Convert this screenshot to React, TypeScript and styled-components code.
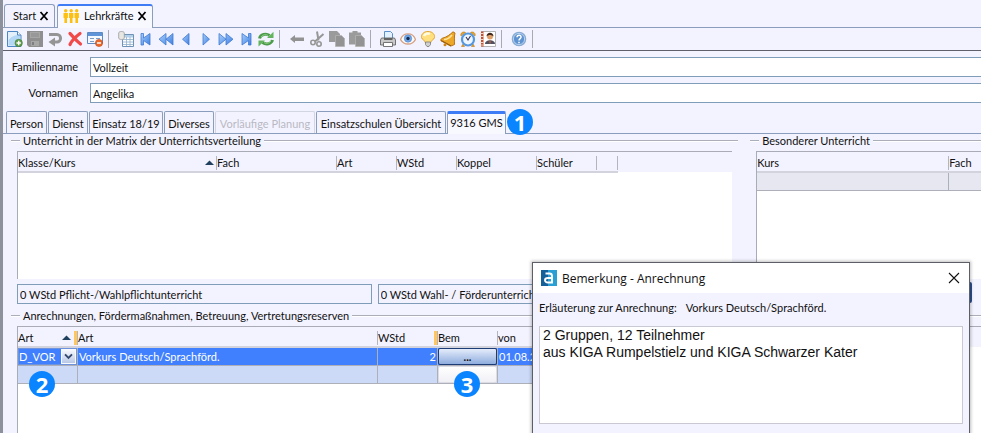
import React from "react";
import styled, { createGlobalStyle, css } from "styled-components";

const ui = `Lato, "Open Sans", sans-serif`;

const GlobalStyle = createGlobalStyle`
  *, *::before, *::after { box-sizing: border-box; }
  body { margin: 0; background: #f3f3ff; }
  body, button, input, select { font-family: ${ui}; font-size: 11px; color: #111; }
  button, input, select, textarea { margin: 0; padding: 0; border: 0; background: none; outline: none; border-radius: 0; }
`;

const Frame = styled.div`
  position: relative;
  display: flex;
  flex-direction: column;
  height: 100vh;
  overflow: hidden;
  background: #f3f3ff;
  border-left: 3px solid #8d919c;
`;

const DocTabs = styled.nav`
  display: flex;
  align-items: flex-end;
  gap: 2px;
  height: 28px;
  flex: none;
  padding-left: 1px;
  border-bottom: 1px solid #8b9dbd;
`;

const DocTab = styled.div<{ $active?: boolean }>`
  display: flex;
  align-items: center;
  justify-content: space-between;
  gap: 3px;
  min-width: ${(p) => (p.$active ? 92 : 50)}px;
  height: 23px;
  padding: 0 5px 0 ${(p) => (p.$active ? 5 : 8)}px;
  border: 1px solid #8b9dbd;
  border-bottom: 0;
  border-radius: 3px 3px 0 0;
  ${(p) =>
    p.$active &&
    css`
      height: 24px;
      margin-bottom: -1px;
      padding-bottom: 2px;
      background: #f8f8ff;
      border-top: 2px solid #3d7cf4;
    `}
`;

const DocName = styled.button`
  display: flex;
  align-items: center;
  gap: 4px;
  line-height: 16px;
`;

const TabClose = styled.button`
  display: flex;
  width: 10px;
  height: 12px;
`;

const Toolbar = styled.div`
  display: flex;
  align-items: center;
  flex: none;
  height: 23px;
  padding-left: 2px;
  border-bottom: 1px solid #5d6068;
`;

const ToolButton = styled.button`
  display: flex;
  align-items: center;
  justify-content: center;
  width: 20px;
  height: 22px;
`;

const Separator = styled.span`
  width: 1px;
  height: 18px;
  margin: 0 7px 0 3px;
  background: #a9a9b2;
`;

const Form = styled.form`
  display: grid;
  grid-template-columns: 75px 1fr;
  gap: 6px 12px;
  flex: none;
  padding: 6px 0 8px;
`;

const Label = styled.label`
  line-height: 20px;
  text-align: right;
`;

const Field = styled.input`
  width: 100%;
  min-width: 0;
  height: 20px;
  padding: 0 2px;
  background: #fff;
  border: 1px solid #7f9db9;
  border-right: 0;
`;

const Tabs = styled.div`
  display: flex;
  align-items: flex-end;
  gap: 1px;
  flex: none;
  height: 23px;
  padding-left: 3px;
  border-bottom: 1px solid #8b9dbd;
`;

const Tab = styled.button<{ $w: number; $active?: boolean }>`
  width: ${(p) => p.$w}px;
  height: 22px;
  padding-top: 3px;
  white-space: nowrap;
  text-align: center;
  border: 1px solid #8b9dbd;
  border-bottom: 0;
  border-radius: 2px 2px 0 0;
  line-height: 14px;
  &:disabled {
    color: #b9b9c3;
    border-color: #d2d5e2;
  }
  ${(p) =>
    p.$active &&
    css`
      height: 23px;
      margin-bottom: -1px;
      padding: 0 0 2px;
      background: #f8f8ff;
      border-top: 3px solid #3d7cf4;
    `}
`;

const Badge = styled.span`
  display: flex;
  align-items: center;
  justify-content: center;
  width: 26px;
  height: 26px;
  border-radius: 50%;
  background: #0a84ff;
  color: #fff;
  font-family: "Open Sans", sans-serif;
  font-size: 22px;
  font-weight: 700;
  line-height: 26px;
`;

const TabBadge = styled(Badge)`
  align-self: center;
  flex: none;
`;

const CellBadge = styled(Badge)<{ $left: number }>`
  position: absolute;
  z-index: 1;
  top: 5px;
  left: ${(p) => p.$left}px;
`;

const Columns = styled.div`
  display: grid;
  grid-template-columns: minmax(0, 728fr) minmax(0, 231fr);
  gap: 12px;
  flex: none;
  padding-left: 8px;
`;

const Group = styled.section<{ $grow?: boolean }>`
  display: flex;
  flex-direction: column;
  min-width: 0;
  ${(p) =>
    p.$grow &&
    css`
      flex: 1;
      margin-left: 8px;
      padding-top: 5px;
    `}
`;

const GroupTitle = styled.h2`
  display: flex;
  align-items: center;
  gap: 3px;
  margin: 0 0 3px;
  font-size: 11px;
  font-weight: 400;
  line-height: 14px;
  white-space: nowrap;
  &::before,
  &::after {
    content: "";
    width: 9px;
    height: 2px;
    background: #abadb8;
    border-bottom: 1px solid #fff;
  }
  &::after {
    flex: 1;
  }
`;

const TableBox = styled.div<{ $fill?: boolean; $open?: boolean }>`
  margin: 0 ${(p) => (p.$open ? 0 : 6)}px 0 6px;
  min-height: 128px;
  overflow: hidden;
  border-top: 1px solid #a9abb6;
  border-left: 1px solid #a9abb6;
  background: linear-gradient(#f3f3ff 20px, #fff 20px);
  ${(p) => p.$fill && "flex: 1; min-height: 80px;"}
`;

const Table = styled.table`
  table-layout: fixed;
  width: 1px;
  border-collapse: separate;
  border-spacing: 0;
`;

const Col = styled.col<{ $w: number }>`
  width: ${(p) => p.$w}px;
`;

const Th = styled.th<{ $mark?: boolean }>`
  height: 21px;
  padding: 2px 0 0;
  font-weight: 400;
  text-align: left;
  white-space: nowrap;
  background: #f3f3ff;
  border-bottom: 2px solid #d3d3de;
  & > span {
    display: flex;
    align-items: center;
    justify-content: space-between;
    height: 14px;
    padding-right: 2px;
    line-height: 14px;
    border-right: 1px solid #b4b4be;
  }
  ${(p) =>
    p.$mark &&
    css`
      & > span {
        padding-right: 0;
      }
      & > span::after {
        content: "";
        width: 3px;
        height: 14px;
        margin-left: 3px;
        background: #ffc65c;
      }
    `}
`;

const HeadText = styled.i`
  flex: 1;
  font-style: normal;
`;

const Td = styled.td<{ $tone: "selected" | "next" | "idle"; $right?: boolean }>`
  position: relative;
  height: 18px;
  padding: 0 1px;
  line-height: 17px;
  white-space: nowrap;
  text-align: ${(p) => (p.$right ? "right" : "left")};
  color: #fff;
  background: ${(p) => ({ selected: "#4080ff", next: "#ccd9f7", idle: "#e7e7f1" })[p.$tone]};
  border-right: 1px solid #adafb9;
  border-bottom: 1px solid #adafb9;
`;

const Combo = styled.span`
  display: flex;
  height: 17px;
  margin: 0 -1px;
  border: 1px solid #6d93dd;
  & select {
    flex: 1;
    min-width: 0;
    appearance: none;
    color: #fff;
  }
  & svg {
    flex: none;
    background: linear-gradient(#f6f8fd, #b9c8e6);
    border: 1px solid #f8faff;
  }
`;

const CellButton = styled.button<{ $primary?: boolean }>`
  display: block;
  width: calc(100% + 2px);
  height: 17px;
  margin-left: -1px;
  border: 1px solid #dcdce4;
  border-radius: 2px;
  background: linear-gradient(#fff, #f0f0f6);
  line-height: 12px;
  ${(p) =>
    p.$primary &&
    css`
      border-color: #1d3c75;
      background: linear-gradient(#e4ecfb, #8fadde);
      font-weight: 700;
    `}
`;

const Sums = styled.div`
  display: flex;
  gap: 6px;
  margin: 5px 6px 0;
`;

const SumField = styled(Field)`
  flex: 1;
  border-right: 1px solid #7f9db9;
  background: #f3f3ff;
`;

const SideActions = styled.div`
  display: flex;
  justify-content: flex-end;
  margin: 3px 9px 0 0;
`;

const SideButton = styled.button`
  width: 70px;
  height: 21px;
  border: 2px solid #2a4f8c;
  border-radius: 2px;
  background: #c3d2ee;
`;

const Dialog = styled.div`
  position: absolute;
  z-index: 2;
  top: 262px;
  left: 529px;
  right: 11px;
  border: 1px solid #5c5f66;
  background: #f3f3ff;
  box-shadow: 0 0 3px 1px rgba(0, 0, 0, 0.25);
`;

const DialogBar = styled.header`
  display: flex;
  align-items: center;
  gap: 5px;
  height: 30px;
  padding: 0 8px;
  background: #fff;
`;

const DialogTitle = styled.h1`
  flex: 1;
  margin: 0;
  font-family: "Open Sans", sans-serif;
  font-size: 12px;
  font-weight: 400;
`;

const DialogClose = styled.button`
  display: flex;
  padding: 2px 1px;
`;

const DialogBody = styled.div`
  padding: 7px 6px 30px;
`;

const DialogLabel = styled.label`
  display: flex;
  gap: 9px;
  line-height: 16px;
  margin-bottom: 10px;
`;

const Remark = styled.textarea`
  display: block;
  width: 100%;
  height: 98px;
  padding: 0 3px;
  resize: none;
  overflow: hidden;
  background: #fff;
  border: 1px solid #c9c9d3;
  color: #111;
  font: 14px/17px "Liberation Sans", Arial, sans-serif;
`;

const arrow = { fill: "url(#arrow)", stroke: "#3f78cf", strokeWidth: 0.8 };

const icons: Record<string, React.ReactNode> = {
  Neu: (
    <>
      <path d="M.5.500h10l3.500 3.500v11.500H.5z" fill="#e3f0fc" stroke="#4e86c4" />
      <path d="M1.500 9c3-4 7-5 11.500-5v10.500H1.500z" fill="#b5d7f6" />
      <path d="M10.500.5v3.500h3.500" fill="#fff" stroke="#4e86c4" />
      <circle cx="11.700" cy="12" r="3.700" fill="#63a04d" stroke="#3d7a35" strokeWidth=".6" />
      <path d="M11.700 9.800v4.400M9.500 12h4.400" stroke="#fff" strokeWidth="1.400" />
    </>
  ),
  Speichern: (
    <>
      <path d="M0 0h16v16H2l-2-2z" fill="#8f8f8f" />
      <path d="M3 1h10v6H3zM4 10h8v5H4z" fill="#a6a6a6" />
      <path d="M4 3h8M4 5h8" stroke="#8a8a8a" />
      <path d="M5 11h2v3H5z" fill="#7e7e7e" />
    </>
  ),
  Rückgängig: (
    <>
      <path d="M2 3.500h8a3.500 3.700 0 0 1 0 7.500H7" stroke="#959595" strokeWidth="3" />
      <path d="M1.500 11L8 6.500v9z" fill="#959595" />
    </>
  ),
  Löschen: (
    <path
      d="M3 2.500c3 3 6 7 10.500 10.500M13 2.500C9 5.500 5 9 3 13.500"
      stroke="#f04a4a"
      strokeWidth="3.200"
      strokeLinecap="round"
    />
  ),
  Maske: (
    <>
      <path d="M.5 1.500h15v11H.5z" fill="#f4f9ff" stroke="#5b8ac5" />
      <path d="M1 2h14v3H1z" fill="#5f94d8" />
      <path d="M3 7.500h4M3 10.500h4M9 7.500h4" stroke="#7f9dc4" />
      <circle cx="12" cy="12" r="3.600" fill="#e9692c" stroke="#c14a17" strokeWidth=".6" />
      <path d="M10 12h4" stroke="#fff" strokeWidth="1.500" />
    </>
  ),
  Tabelle: (
    <>
      <path d="M4.500 3.500h11v12h-11z" fill="#fff" stroke="#6e93b8" />
      <path d="M5 4h10v2.500H5z" fill="#b4cfe8" />
      <path d="M5 8.500h10M5 11h10M5 13.500h10M8.500 6v9M12 6v9" stroke="#8fb0cd" strokeWidth=".8" />
      <path d="M.700 2c0-2 5.600-2 5.600 0v5c0 2-5.600 2-5.600 0z" fill="#e6e6e2" stroke="#999" strokeWidth=".8" />
    </>
  ),
  Erster: <path d="M3 2.500h2.500v4.500L12 2.500v11.500L5.500 9.500V14H3z" {...arrow} />,
  Zurückspulen: <path d="M8 2.500v11.500L1 8.200zM15 2.500v11.500L8 8.200z" {...arrow} />,
  Vorheriger: <path d="M11 2.500v11.500L4.500 8.200z" {...arrow} />,
  Nächster: <path d="M5 2.500v11.500l6.500-5.800z" {...arrow} />,
  Vorspulen: <path d="M1 2.500v11.500l7-5.800zM8 2.500v11.500l7-5.800z" {...arrow} />,
  Letzter: <path d="M13 2.500h-2.500v4.500L4 2.500v11.500l6.500-4.500V14H13z" {...arrow} />,
  Aktualisieren: (
    <>
      <path d="M1.500 7.500C2.500 3.500 8 2 11.500 4.500" stroke="#4c9b4a" strokeWidth="3" />
      <path d="M9 7h6.500V.8z" fill="#63b35e" />
      <path d="M14.500 9c-1 4-6.500 5-10 2.500" stroke="#4c9b4a" strokeWidth="3" />
      <path d="M7 9.500H.5v6z" fill="#63b35e" />
      <path d="M3 6c2-2.500 5-3 7-1.500M13 10c-2 2.500-5 3-7 1.500" stroke="#a4dc9c" strokeWidth=".8" />
    </>
  ),
  Zurückspringen: <path d="M1 8l5-4v2.500h9v3.500H6v2z" fill="#929292" />,
  Ausschneiden: (
    <>
      <path d="M8 .5l1.500 9M14.500 3L6 10.500" stroke="#979797" strokeWidth="2" />
      <circle cx="4" cy="11.500" r="2.200" stroke="#979797" strokeWidth="1.600" />
      <circle cx="10" cy="13" r="2.200" stroke="#979797" strokeWidth="1.600" />
    </>
  ),
  Kopieren: (
    <>
      <path d="M0 0h8l3 3v8H0z" fill="#9b9b9b" />
      <path d="M6.500 4.500h6l3 3v8h-9z" fill="#939393" stroke="#b2b2b2" strokeWidth=".8" />
    </>
  ),
  Einfügen: (
    <>
      <path d="M0 1.500h3.500V0h5v1.500H12v12H0z" fill="#9b9b9b" />
      <path d="M6.500 4.500h6l3 3v8h-9z" fill="#939393" stroke="#b2b2b2" strokeWidth=".8" />
    </>
  ),
  Drucken: (
    <>
      <path d="M4.500.5h6l2 2V8h-8z" fill="#e2f0ff" stroke="#5a8fcb" />
      <path d="M1.500 7h13l1 2v5H.5V9z" fill="#c9c9c9" stroke="#666" strokeWidth=".9" />
      <path d="M4 7h8.500v2H4z" fill="#626262" />
      <path d="M3.500 11.500h9v4h-9z" fill="#fff" stroke="#666" strokeWidth=".9" />
    </>
  ),
  Ansicht: (
    <>
      <path d="M.5 8.500C3 1 13 1 15.500 8.500 12 14.500 4 14.500.5 8.500z" fill="#fbfbfb" stroke="#d5a183" strokeWidth="1.300" />
      <circle cx="8" cy="7.500" r="3.700" fill="#74a8e6" stroke="#4c80c6" strokeWidth=".6" />
      <circle cx="8" cy="7.500" r="1.700" fill="#14294d" />
    </>
  ),
  Hinweis: (
    <>
      <path d="M8 .5C3 .5 1 4 1.500 6.500S5.500 9.500 5.500 12h5c0-2.500 3.500-3 4-5.500S13 .5 8 .5z" fill="#ffdf7e" stroke="#e3a535" />
      <path d="M4 5c1-2.500 4-3 6-2" stroke="#fffbe0" strokeWidth="2.500" />
      <path d="M5.500 11h5v2.500L9 15.500H7l-1.500-2z" fill="#d0d0cc" stroke="#777" strokeWidth=".8" />
    </>
  ),
  Glocke: (
    <>
      <path d="M13 .8L15 2c-1 4-.5 8-.500 11.500L11 15 .8 9.500c0-1.500.700-2 2.200-2.500 4-1 7-3.500 10-6.200z" fill="#eda82a" stroke="#b87412" />
      <path d="M4 8.500c4 0 6-2 8-4.500" stroke="#ffe59b" strokeWidth="1.500" />
      <path d="M1 9.500L11 15" stroke="#9d5f0c" strokeWidth="1.400" />
      <circle cx="5" cy="13.800" r="1.500" fill="#cc8518" />
    </>
  ),
  Wecker: (
    <>
      <path
        d="M1 5C0 2 3 0 5.500 1.500zM15 5c1-3-2-5-4.500-3.500zM3 13l-1.500 2.500h3zM13 13l1.500 2.500h-3z"
        fill="#e6a42d"
        stroke="#b97c1c"
        strokeWidth=".6"
      />
      <circle cx="8" cy="8.500" r="6" fill="#eef6ff" stroke="#5597dc" strokeWidth="2.200" />
      <path d="M6 6l2 3 2.500-4" stroke="#335" strokeWidth="1.100" />
    </>
  ),
  Kontakte: (
    <>
      <path d="M1.500.5h14v15h-14z" fill="#fff" stroke="#aaa" strokeWidth=".9" />
      <path d="M1 .5h2.500v15H1z" fill="#c0532f" />
      <path d="M.5 2.500h3M.5 5.500h3M.5 8.500h3M.5 11.500h3M.5 14h3" stroke="#f1d5c5" />
      <circle cx="10" cy="5.500" r="3" fill="#dfa06a" />
      <path d="M6.500 5.500c0-5 7-5 7 0-2-2-5-2-7 0z" fill="#40291b" />
      <path d="M5 13c0-5 10-5 10 0z" fill="#4f5260" />
      <path d="M10 9.500v3" stroke="#e9632f" />
    </>
  ),
  Hilfe: (
    <>
      <circle cx="8" cy="8" r="6.600" fill="#5d93d0" stroke="#89abd3" strokeWidth="1.400" />
      <circle cx="8" cy="8" r="5.600" stroke="#dfeafa" strokeWidth=".7" />
      <path d="M6 6.300c0-3 4.500-2.600 4 0-.3 1.400-2 1.300-2 3.200M8 10.800v1.500" stroke="#fff" strokeWidth="1.500" />
    </>
  ),
};

const toolGroups = [
  ["Neu", "Speichern", "Rückgängig", "Löschen", "Maske"],
  ["Tabelle", "Erster", "Zurückspulen", "Vorheriger", "Nächster", "Vorspulen", "Letzter", "Aktualisieren"],
  ["Zurückspringen", "Ausschneiden", "Kopieren", "Einfügen"],
  ["Drucken", "Ansicht", "Hinweis", "Glocke", "Wecker", "Kontakte"],
  ["Hilfe"],
];

const ToolIcon = ({ name }: { name: string }) => (
  <svg width="16" height="16" viewBox="0 0 16 16" fill="none" aria-hidden="true">
    {name === "Erster" && (
      <defs>
        <linearGradient id="arrow" x1="0" y1="0" x2="1" y2="1">
          <stop offset="0" stopColor="#a9cffc" />
          <stop offset="1" stopColor="#3f80e2" />
        </linearGradient>
      </defs>
    )}
    {icons[name]}
  </svg>
);

const CloseMark = () => (
  <svg width="10" height="12" viewBox="0 0 10 12" aria-hidden="true">
    <path d="M1.500 2l7 8M8.500 2l-7 8" stroke="#000" strokeWidth="1.800" />
  </svg>
);

const People = () => (
  <svg width="17" height="14" viewBox="0 0 17 14" fill="#fdbf10" aria-hidden="true">
    {[0, 5.5, 11].map((x) => (
      <g key={x} transform={`translate(${x} 0)`}>
        <circle cx="2.700" cy="1.800" r="1.700" />
        <path d="M.5 4h4.400v5H4v5H1.400V9H.5z" />
      </g>
    ))}
  </svg>
);

const SortMark = () => (
  <svg width="9" height="5" viewBox="0 0 9 5" aria-hidden="true">
    <path d="M0 5l4.500-4.500L9 5z" fill="#20405f" />
  </svg>
);

const tabs = [
  { name: "Person", w: 41 },
  { name: "Dienst", w: 40 },
  { name: "Einsatz 18/19", w: 74 },
  { name: "Diverses", w: 50 },
  { name: "Vorläufige Planung", w: 100, disabled: true },
  { name: "Einsatzschulen Übersicht", w: 130 },
  { name: "9316 GMS", w: 59, active: true },
];

type Column = { name: string; w: number; sorted?: boolean; mark?: boolean };

const matrixColumns: Column[] = [
  { name: "Klasse/Kurs", w: 199, sorted: true },
  { name: "Fach", w: 120 },
  { name: "Art", w: 60 },
  { name: "WStd", w: 60 },
  { name: "Koppel", w: 80 },
  { name: "Schüler", w: 60 },
  { name: "", w: 21 },
];

const specialColumns: Column[] = [
  { name: "Kurs", w: 192 },
  { name: "Fach", w: 60 },
];

const creditColumns: Column[] = [
  { name: "Art", w: 60, sorted: true, mark: true },
  { name: "Art", w: 300 },
  { name: "WStd", w: 60, mark: true },
  { name: "Bem", w: 60 },
  { name: "von", w: 60 },
];

const Head = ({ columns }: { columns: Column[] }) => (
  <>
    <colgroup>
      {columns.map((c, i) => (
        <Col key={i} $w={c.w} />
      ))}
    </colgroup>
    <thead>
      <tr>
        {columns.map((c, i) => (
          <Th key={i} $mark={c.mark}>
            <span>
              <HeadText>{c.name}</HeadText>
              {c.sorted && <SortMark />}
            </span>
          </Th>
        ))}
      </tr>
    </thead>
  </>
);

export default function App() {
  return (
    <Frame>
      <GlobalStyle />
      <DocTabs>
        <DocTab>
          <DocName>Start</DocName>
          <TabClose aria-label="Start schließen">
            <CloseMark />
          </TabClose>
        </DocTab>
        <DocTab $active>
          <DocName>
            <People />
            Lehrkräfte
          </DocName>
          <TabClose aria-label="Lehrkräfte schließen">
            <CloseMark />
          </TabClose>
        </DocTab>
      </DocTabs>

      <Toolbar role="toolbar">
        {toolGroups.map((group) => (
          <React.Fragment key={group[0]}>
            {group.map((name) => (
              <ToolButton key={name} aria-label={name}>
                <ToolIcon name={name} />
              </ToolButton>
            ))}
            <Separator />
          </React.Fragment>
        ))}
      </Toolbar>

      <Form>
        <Label htmlFor="familienname">Familienname</Label>
        <Field id="familienname" defaultValue="Vollzeit" />
        <Label htmlFor="vornamen">Vornamen</Label>
        <Field id="vornamen" defaultValue="Angelika" />
      </Form>

      <Tabs role="tablist">
        {tabs.map((t) => (
          <Tab key={t.name} role="tab" $w={t.w} $active={t.active} aria-selected={!!t.active} disabled={t.disabled}>
            {t.name}
          </Tab>
        ))}
        <TabBadge>1</TabBadge>
      </Tabs>

      <Columns>
        <Group>
          <GroupTitle>Unterricht in der Matrix der Unterrichtsverteilung</GroupTitle>
          <TableBox>
            <Table>
              <Head columns={matrixColumns} />
            </Table>
          </TableBox>
          <Sums>
            <SumField readOnly aria-label="Pflichtunterricht" defaultValue="0 WStd Pflicht-/Wahlpflichtunterricht" />
            <SumField readOnly aria-label="Wahlunterricht" defaultValue="0 WStd Wahl- / Förderunterricht" />
          </Sums>
        </Group>
        <Group>
          <GroupTitle>Besonderer Unterricht</GroupTitle>
          <TableBox $open>
            <Table>
              <Head columns={specialColumns} />
              <tbody>
                <tr>
                  <Td $tone="idle" />
                  <Td $tone="idle" />
                </tr>
              </tbody>
            </Table>
          </TableBox>
          <SideActions>
            <SideButton aria-label="Bearbeiten" />
          </SideActions>
        </Group>
      </Columns>

      <Group $grow>
        <GroupTitle>Anrechnungen, Fördermaßnahmen, Betreuung, Vertretungsreserven</GroupTitle>
        <TableBox $fill $open>
          <Table>
            <Head columns={creditColumns} />
            <tbody>
              <tr>
                <Td $tone="selected">
                  <Combo>
                    <select aria-label="Art" defaultValue="D_VOR">
                      <option>D_VOR</option>
                    </select>
                    <svg width="15" height="15" viewBox="0 0 15 15" fill="none" aria-hidden="true">
                      <path d="M3.500 5l4 4 4-4" stroke="#33496e" strokeWidth="2.200" />
                    </svg>
                  </Combo>
                </Td>
                <Td $tone="selected">Vorkurs Deutsch/Sprachförd.</Td>
                <Td $tone="selected" $right>
                  2
                </Td>
                <Td $tone="selected">
                  <CellButton $primary>...</CellButton>
                </Td>
                <Td $tone="selected">01.08.2018</Td>
              </tr>
              <tr>
                <Td $tone="next">
                  <CellBadge $left={11}>2</CellBadge>
                </Td>
                <Td $tone="next" />
                <Td $tone="next" />
                <Td $tone="next">
                  <CellButton aria-label="Bemerkung" />
                  <CellBadge $left={16}>3</CellBadge>
                </Td>
                <Td $tone="next" />
              </tr>
            </tbody>
          </Table>
        </TableBox>
      </Group>

      <Dialog role="dialog" aria-labelledby="dialog-title">
        <DialogBar>
          <svg width="16" height="16" viewBox="0 0 16 16" fill="none" aria-hidden="true">
            <path d="M0 0h16v16H0z" fill="#2a9fd4" />
            <path d="M0 0h7v16H0z" fill="#16609a" />
            <path d="M4.500 3.500h4c2 0 2.500 1 2.500 2.500v6.500H7c-4 0-4-4.500 0-4.500h4" stroke="#fff" strokeWidth="1.900" />
          </svg>
          <DialogTitle id="dialog-title">Bemerkung - Anrechnung</DialogTitle>
          <DialogClose aria-label="Schließen">
            <svg width="12" height="12" viewBox="0 0 12 12" aria-hidden="true">
              <path d="M1 1l10 10M11 1L1 11" stroke="#111" strokeWidth="1.100" />
            </svg>
          </DialogClose>
        </DialogBar>
        <DialogBody>
          <DialogLabel htmlFor="bemerkung">
            <span>Erläuterung zur Anrechnung:</span>
            <span>Vorkurs Deutsch/Sprachförd.</span>
          </DialogLabel>
          <Remark
            id="bemerkung"
            defaultValue={"2 Gruppen, 12 Teilnehmer\naus KIGA Rumpelstielz und KIGA Schwarzer Kater"}
          />
        </DialogBody>
      </Dialog>
    </Frame>
  );
}
